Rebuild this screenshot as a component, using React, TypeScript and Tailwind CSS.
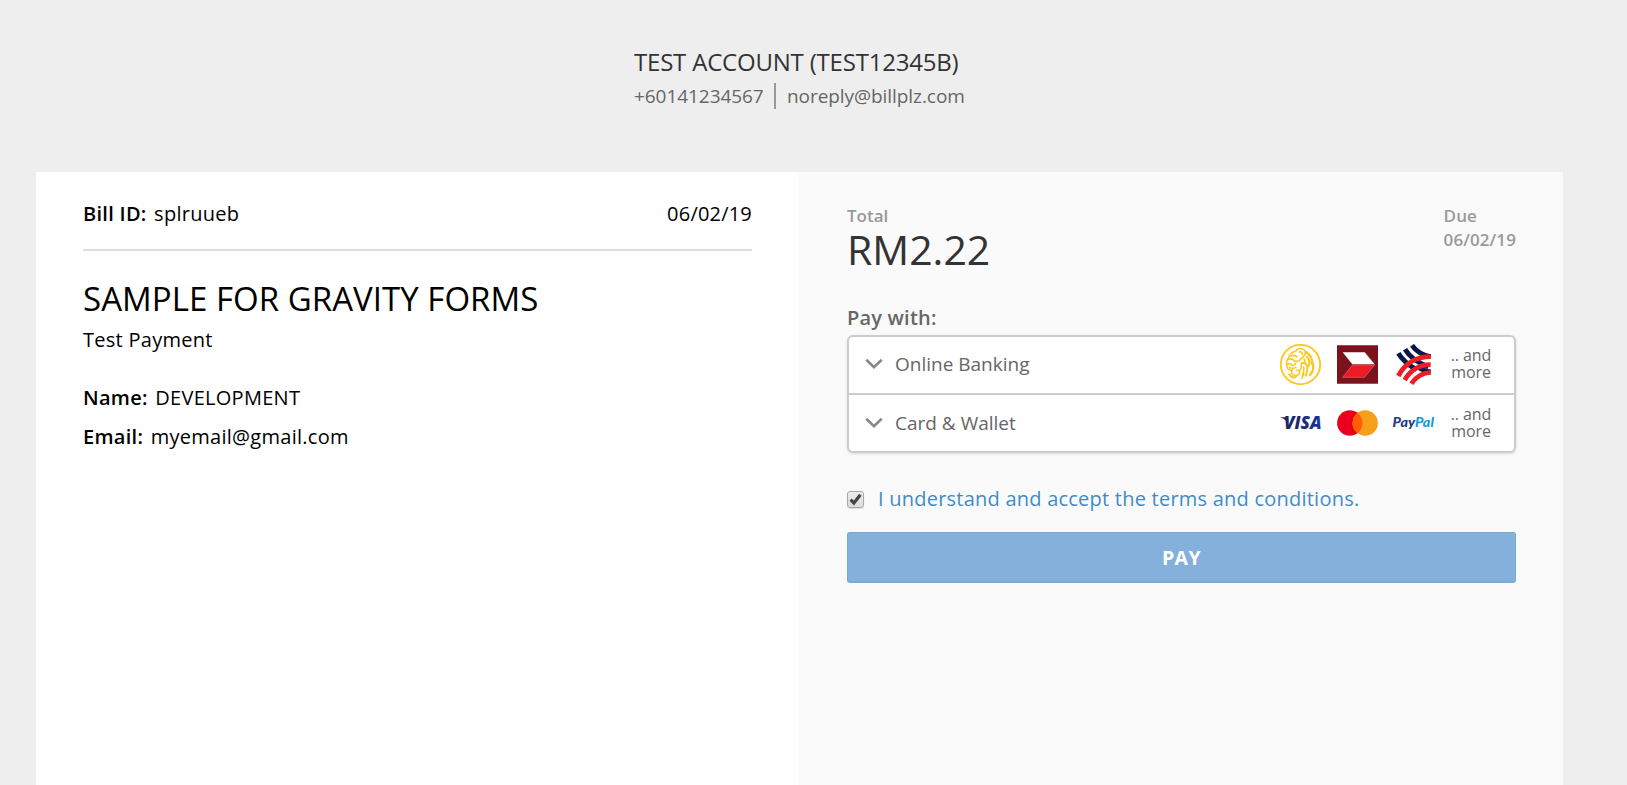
import type { ReactNode } from "react";

function Chevron() {
  return (
    <svg width="18" height="12" viewBox="0 0 18 12" fill="none" stroke="#888" strokeWidth="2.6">
      <path d="M1.3 1.8 9 9.2l7.7-7.4" />
    </svg>
  );
}

function MaybankIcon() {
  return (
    <svg width="41" height="41" viewBox="0 0 123 123" fill="none" stroke="#fcc81e" strokeLinecap="round" strokeLinejoin="round">
      <circle cx="61.5" cy="61.5" r="59" strokeWidth="5.5" />
      <g strokeWidth="4.6">
        <path d="M50 18c9-7 22-5 26 5 2 8-4 13-9 19" />
        <path d="M58 24c6-2 11 2 8 8" />
        <path d="M50 19c-6 5-12 5-16 9-8 7-10 16-14 25-2 7 0 14 3 21 4 6 9 4 14 5" />
        <path d="M24 47c7-4 15-1 19 4 8 4 17-1 22-9" />
        <path d="M34 36c6-3 12-2 17 2" />
        <path d="M21 62c6-5 11-3 14 1 5 3 10 0 12-5" />
        <path d="M28 70c6 4 13 4 20 0" />
        <path d="M36 80c-4 6 0 13 7 14 9 1 15-1 16-9 1-6-5-9-10-6" />
        <path d="M48 98c-7 5-16 2-20-7" strokeWidth="6" />
        <path d="M57 82c6-6 8-15 7-24" />
        <path d="M66 56c9 0 15 5 16 13 1 9-2 18-4 26" strokeWidth="6" />
        <path d="M71 95c-2-9 2-18 0-26" />
        <path d="M78 24c12 8 20 20 18 36" strokeWidth="6.5" />
        <path d="M81 38c7 10 9 20 5 28" strokeWidth="6.5" />
        <path d="M98 58c5 13 0 25-8 35" strokeWidth="7" />
        <path d="M66 103c2-5 3-10 2-15" />
        <path d="M72 45c3 4 4 7 3 11" />
      </g>
    </svg>
  );
}

function CimbIcon() {
  return (
    <svg width="41" height="39" viewBox="0 0 123 117">
      <path fill="#7b121c" d="M0 0h123v117H0z" />
      <path stroke="#b9858a" strokeWidth="2" d="M0 1h123M0 116h123" />
      <path fill="#fff" d="M17 22h66l30 36H46z" />
      <path fill="#ed1c24" stroke="#d98a8f" strokeWidth="1.5" d="M46 60h66L83 97H17z" />
    </svg>
  );
}

function HongLeongIcon() {
  return (
    <svg width="41" height="41" viewBox="0 0 123 123" fill="none" strokeWidth="14.5">
      <g stroke="#05194b">
        <path d="M13 28c10 17 24 32 54 49" />
        <path d="M33 16c12 20 32 38 70 53" />
        <path d="M54 4c12 17 32 30 56 34" />
        <path d="M70 68c12 9 25 14 40 16" />
      </g>
      <g stroke="#ee1c25">
        <path d="M13 96c20-38 54-58 97-58" />
        <path d="M32 108c18-30 44-46 78-46" />
        <path d="M52 119c15-22 34-33 58-34" />
      </g>
    </svg>
  );
}

function VisaIcon() {
  return (
    <svg width="41" height="25" viewBox="0 -5 41 25" className="overflow-visible">
      <defs>
        <linearGradient id="visa" x1="0" x2="1">
          <stop offset="0" stopColor="#20245c" />
          <stop offset="1" stopColor="#18349b" />
        </linearGradient>
      </defs>
      <path fill="#20245c" d="M0.3 1.3h5.6l2 3-1.4 1.4C5 3.4 2.8 2.2 0.3 1.6z" />
      <text x="4" y="13.3" textLength="37.6" lengthAdjust="spacingAndGlyphs" fill="url(#visa)" className="font-['Open_Sans',sans-serif] text-[16.8px] font-extrabold italic">VISA</text>
    </svg>
  );
}

function MastercardIcon() {
  return (
    <svg width="41" height="26" viewBox="0 0 41 26">
      <circle cx="12.8" cy="13" r="12.7" fill="#eb001b" />
      <circle cx="28.2" cy="13" r="12.7" fill="#f79e1b" />
      <path fill="#ff5f00" d="M20.5 2.9a12.7 12.7 0 0 1 0 20.2 12.7 12.7 0 0 1 0-20.2z" />
    </svg>
  );
}

function PaypalIcon() {
  return (
    <svg width="41" height="24" viewBox="0 0 41 24" className="overflow-visible">
      <text x="-1.6" y="15.6" textLength="41.5" lengthAdjust="spacingAndGlyphs" className="font-['Lato',sans-serif] text-[13px] font-black italic">
        <tspan fill="#243b80">Pay</tspan>
        <tspan fill="#159bd7">Pal</tspan>
      </text>
    </svg>
  );
}

function Method({ label, children }: { label: string; children: ReactNode }) {
  return (
    <div className="flex h-14 items-center pr-[22px] pl-4">
      <Chevron />
      <span className="ml-3 grow text-[19px] leading-7 text-[#666]">{label}</span>
      <div className="flex items-center gap-4">{children}</div>
      <span className="ml-[15px] w-[42px] pb-px text-center text-[16px] leading-[17px] tracking-[-0.1px] text-[#666]">
        .. and
        <br />
        more
      </span>
    </div>
  );
}

function Field({ label, value }: { label: string; value: string }) {
  return (
    <div className="flex gap-[7.5px]">
      <span className="font-semibold">{label}</span>
      <span>{value}</span>
    </div>
  );
}

export default function App() {
  return (
    <div className="flex h-[785px] flex-col overflow-hidden bg-[#eee] font-['Open_Sans',sans-serif] text-black">
      <header className="h-[172px] shrink-0 pt-[46px] pl-[634px]">
        <div className="text-[24px] leading-8 tracking-[-0.2px] text-[#333]">TEST ACCOUNT (TEST12345B)</div>
        <div className="mt-[5px] flex text-[19px] leading-[26px] tracking-[-0.06px] text-[#666]">
          <span className="w-[129px]">+60141234567</span>
          <span className="mr-[11px] ml-[11px] w-0.5 bg-[#999]" />
          <span>noreply@billplz.com</span>
        </div>
      </header>

      <main className="mr-16 ml-9 flex grow">
        <section className="w-[763px] bg-white px-[47px] pt-7 text-[20px] leading-7 tracking-[0.28px]">
          <div className="flex justify-between border-b-2 border-[#ddd] pb-[21px]">
            <Field label="Bill ID:" value="splruueb" />
            <span className="tracking-[0.2px]">06/02/19</span>
          </div>
          <h1 className="mt-[26px] text-[33px] leading-[44px] tracking-[0.04px]">SAMPLE FOR GRAVITY FORMS</h1>
          <p className="mt-[5px]">Test Payment</p>
          <div className="mt-[30px] flex flex-col gap-[11px]">
            <Field label="Name:" value="DEVELOPMENT" />
            <Field label="Email:" value="myemail@gmail.com" />
          </div>
        </section>

        <section className="grow bg-[#fafafa] pt-8 pr-[47px] pl-12">
          <div className="flex h-[70px] justify-between">
            <div>
              <div className="text-[17px] leading-6 font-semibold text-[#999]">Total</div>
              <div className="-mt-[3px] text-[41px] leading-[48px] text-[#333]">RM2.22</div>
            </div>
            <div className="text-[17px] leading-6 font-semibold tracking-[0.1px] text-[#999]">
              <div>Due</div>
              <div>06/02/19</div>
            </div>
          </div>

          <div className="mt-[30px] text-[20px] leading-7 font-semibold tracking-[0.2px] text-[#666]">Pay with:</div>
          <div className="mt-[3px] rounded-[6px] border-2 border-[#ccc] bg-white shadow-[0_1px_3px_rgba(0,0,0,0.12)]">
            <div className="-mt-px mb-px">
              <Method label="Online Banking">
                <MaybankIcon />
                <CimbIcon />
                <HongLeongIcon />
              </Method>
            </div>
            <div className="h-0.5 bg-[#ccc]" />
            <Method label="Card &amp; Wallet">
              <VisaIcon />
              <MastercardIcon />
              <PaypalIcon />
            </Method>
          </div>

          <label className="mt-8 flex text-[20px] leading-7 tracking-[0.23px] text-[#428bca]">
            <span className="mt-[6px] mr-[14px] flex h-[17px] w-[17px] items-center justify-center rounded-[3px] border border-[#a8a8a8] bg-linear-to-b from-[#ececec] to-[#dcdcdc] shadow-[0_1px_1px_rgba(0,0,0,0.12)]">
              <svg width="13" height="13" viewBox="0 0 13 13" fill="none" stroke="#444" strokeWidth="3.2">
                <path d="M1.6 6.6 4.9 10 11.4 1.8" />
              </svg>
            </span>
            <span>I understand and accept the terms and conditions.</span>
          </label>

          <button className="mt-[19px] h-[51px] w-full rounded-[3px] border border-b-2 border-[#78aad4] bg-[#84b1db] pt-0.5 text-[19.5px] font-bold tracking-[0.4px] text-white">
            PAY
          </button>
        </section>
      </main>
    </div>
  );
}
